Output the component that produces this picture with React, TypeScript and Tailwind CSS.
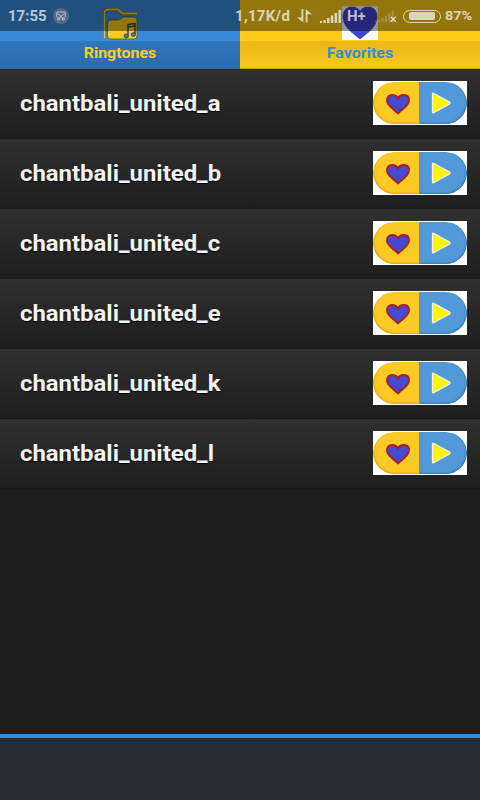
import React from "react";

const ringtones = [
  "chantbali_united_a",
  "chantbali_united_b",
  "chantbali_united_c",
  "chantbali_united_e",
  "chantbali_united_k",
  "chantbali_united_l",
];

function FolderIcon() {
  return (
    <svg width="36" height="33" viewBox="0 0 36 33" fill="none">
      <path d="M2.500 31V6q0-3.500 3.500-3.500h10l4.500 4H35" stroke="#4b5a3b" strokeWidth="3" />
      <path d="M2.500 31V6q0-3.500 3.500-3.500h10l4.500 4H35" stroke="#ffcc1d" strokeWidth="1.800" />
      <path
        d="M5.500 16q0-3 3-3h7q2 0 3.500-1.500T22.500 10H32q3 0 3 3v16q0 3-3 3H8.500q-3 0-3-3Z"
        fill="#ffcc1d"
        stroke="#4b5a3b"
        strokeWidth=".8"
      />
      <path d="M26 28.500V17.500l7-1v11M26 20l7-1" stroke="#2b4a4f" strokeWidth="1.500" />
      <ellipse cx="24.200" cy="29" rx="2.200" ry="2" fill="#287cc9" stroke="#2b4a4f" strokeWidth=".8" />
      <ellipse cx="31.400" cy="27.500" rx="2.100" ry="2" fill="#287cc9" stroke="#2b4a4f" strokeWidth=".8" />
    </svg>
  );
}

function BigHeart() {
  return (
    <svg width="36" height="34" viewBox="0 0 36 34">
      <rect width="36" height="34" fill="#fff" />
      <path
        d="M18 33C12 28 1 21 1 11C1 4 5 1 10 1c4 0 6.500 1.500 8 4.500C19.500 2.500 22 1 26 1c5 0 9 3 9 10C35 21 24 28 18 33Z"
        fill="#3e43d2"
        stroke="#34518e"
        strokeWidth=".8"
      />
    </svg>
  );
}

function Signal({ className = "" }) {
  return (
    <svg width="21" height="13" viewBox="0 0 21 13" fill="currentColor" className={className}>
      <rect y="11" width="2" height="2" />
      <rect x="3.500" y="10" width="2.200" height="3" />
      <rect x="7" y="8" width="2.500" height="5" />
      <rect x="10.800" y="5.500" width="2.500" height="7.500" />
      <rect x="14.600" y="3" width="2.500" height="10" />
      <rect x="18.400" width="2.500" height="13" />
    </svg>
  );
}

function StatusBar() {
  return (
    <div className="absolute inset-x-0 top-0 flex h-[31px] items-center bg-black/42 pt-px text-white/70">
      <span className="ml-2 w-[45px] scale-y-94 text-[15px] font-bold leading-4">17:55</span>
      <svg width="16" height="16" viewBox="0 0 16 16" fill="none">
        <circle cx="8" cy="8" r="8" fill="#69728a" fillOpacity=".75" />
        <path
          d="M4.500 9.500q-1-.5-.7-2V5q0-1 1-1h6.400q1 0 1 1v2.500q.3 1.500-.7 2M5 5.500l5 5M11 5.500l-5 5"
          stroke="#c6ccd6"
        />
        <circle cx="5.700" cy="11" r="1.100" stroke="#c6ccd6" />
        <circle cx="10.300" cy="11" r="1.100" stroke="#c6ccd6" />
      </svg>
      <span className="ml-[166px] w-[62px] scale-y-94 whitespace-nowrap text-[15px] font-bold leading-4 tracking-[0.3px]">
        1,17K/d
      </span>
      <svg width="15" height="14" viewBox="0 0 15 14" fill="currentColor">
        <path d="M4.500 0H6.300V13.500L0 8.500H4.500ZM8.700 0L15 5.200H10.500V13.500H8.700Z" />
      </svg>
      <Signal className="ml-2" />
      <span className="ml-[6px] w-[28px] scale-y-94 text-[15px] font-bold leading-4">H+</span>
      <span className="flex w-[29px] items-end">
        <Signal className="-mr-1 w-[19px] text-white/20" />
        <svg width="7" height="7" viewBox="0 0 7 7" stroke="currentColor" strokeWidth="1.300" className="shrink-0">
          <path d="M.8.8l5 5M5.800.8l-5 5" />
        </svg>
      </span>
      <span className="-ml-px flex h-[13px] w-[38px] rounded-full border border-white/70 px-[5px] py-[1.5px]">
        <span className="flex-1 rounded-[2px] bg-white/70" />
      </span>
      <span className="ml-[4px] scale-y-94 text-[14.4px] font-bold leading-4">87%</span>
    </div>
  );
}

function RowButtons() {
  return (
    <div className="mb-px h-11 w-[94px] bg-white py-px">
      <div className="flex h-[42px] overflow-hidden rounded-full">
        <button className="flex w-[47px] items-center justify-center rounded-l-full border-r border-[#a08a45] bg-[#fcca25] pl-1 pt-px shadow-[inset_1px_-1px_2px_#d8a51e]">
          <svg width="26" height="22" viewBox="0 0 26 22">
            <path
              d="M13 20.500C9 16 2 13 2 7.500C2 4 4 2 7 2c3 0 5 1 6 3.500C14 3 16 2 19 2c3 0 5 2 5 5.500C24 13 17 16 13 20.500Z"
              fill="#444bd0"
              stroke="#b11b20"
              strokeWidth="1.800"
            />
          </svg>
        </button>
        <button className="flex w-[47px] items-center justify-center rounded-r-full bg-[#5199d9] pr-[5px] shadow-[inset_-1px_-1px_2px_#3978b3]">
          <svg width="20" height="22" viewBox="0 0 20 22">
            <path
              d="M1.500 2Q1.500.5 3 1.500L18.500 10Q19.500 11 18.500 12L3 20.500Q1.500 21.500 1.500 20Z"
              fill="#fff500"
              stroke="#f5f5ea"
              strokeWidth="1.300"
            />
          </svg>
        </button>
      </div>
    </div>
  );
}

function App() {
  return (
    <div className="relative flex h-[800px] w-[480px] flex-col overflow-hidden bg-[#1e1e1e] font-['Roboto',sans-serif]">
      <div className="flex h-[69px] text-[16px] font-bold">
        <div className="flex w-1/2 flex-col items-center border-b border-[#2367a5] bg-[linear-gradient(#388bd9_41px,#2f78bd_41px,#296cab)] pt-[7px] text-[#ffcc1d]">
          <FolderIcon />
          <span className="mt-[4px] scale-y-94 leading-[18px]">Ringtones</span>
        </div>
        <div className="flex w-1/2 flex-col items-center border-b border-[#c89d13] bg-[linear-gradient(#ffcb1b_41px,#e8b816_41px,#fbc81a)] pt-[6px] text-[#388bd9]">
          <BigHeart />
          <span className="mt-[4px] scale-y-94 leading-[18px]">Favorites</span>
        </div>
      </div>

      <div className="flex-1">
        {ringtones.map((name) => (
          <div
            key={name}
            className="flex h-[70px] items-center justify-between border-b border-[#191919] bg-linear-to-b from-[#303030] to-[#1e1e1e] pl-5 pr-[13px]"
          >
            <span className="scale-y-94 pt-[3px] text-[23.9px] font-bold text-[#f3f3f3] text-shadow-[0_1px_1px_#000]">
              {name}
            </span>
            <RowButtons />
          </div>
        ))}
      </div>

      <div className="h-[66px] border-t-4 border-[#388bd9] bg-linear-to-b from-[#252b30] to-[#292d36]" />

      <StatusBar />
    </div>
  );
}

export default App;
